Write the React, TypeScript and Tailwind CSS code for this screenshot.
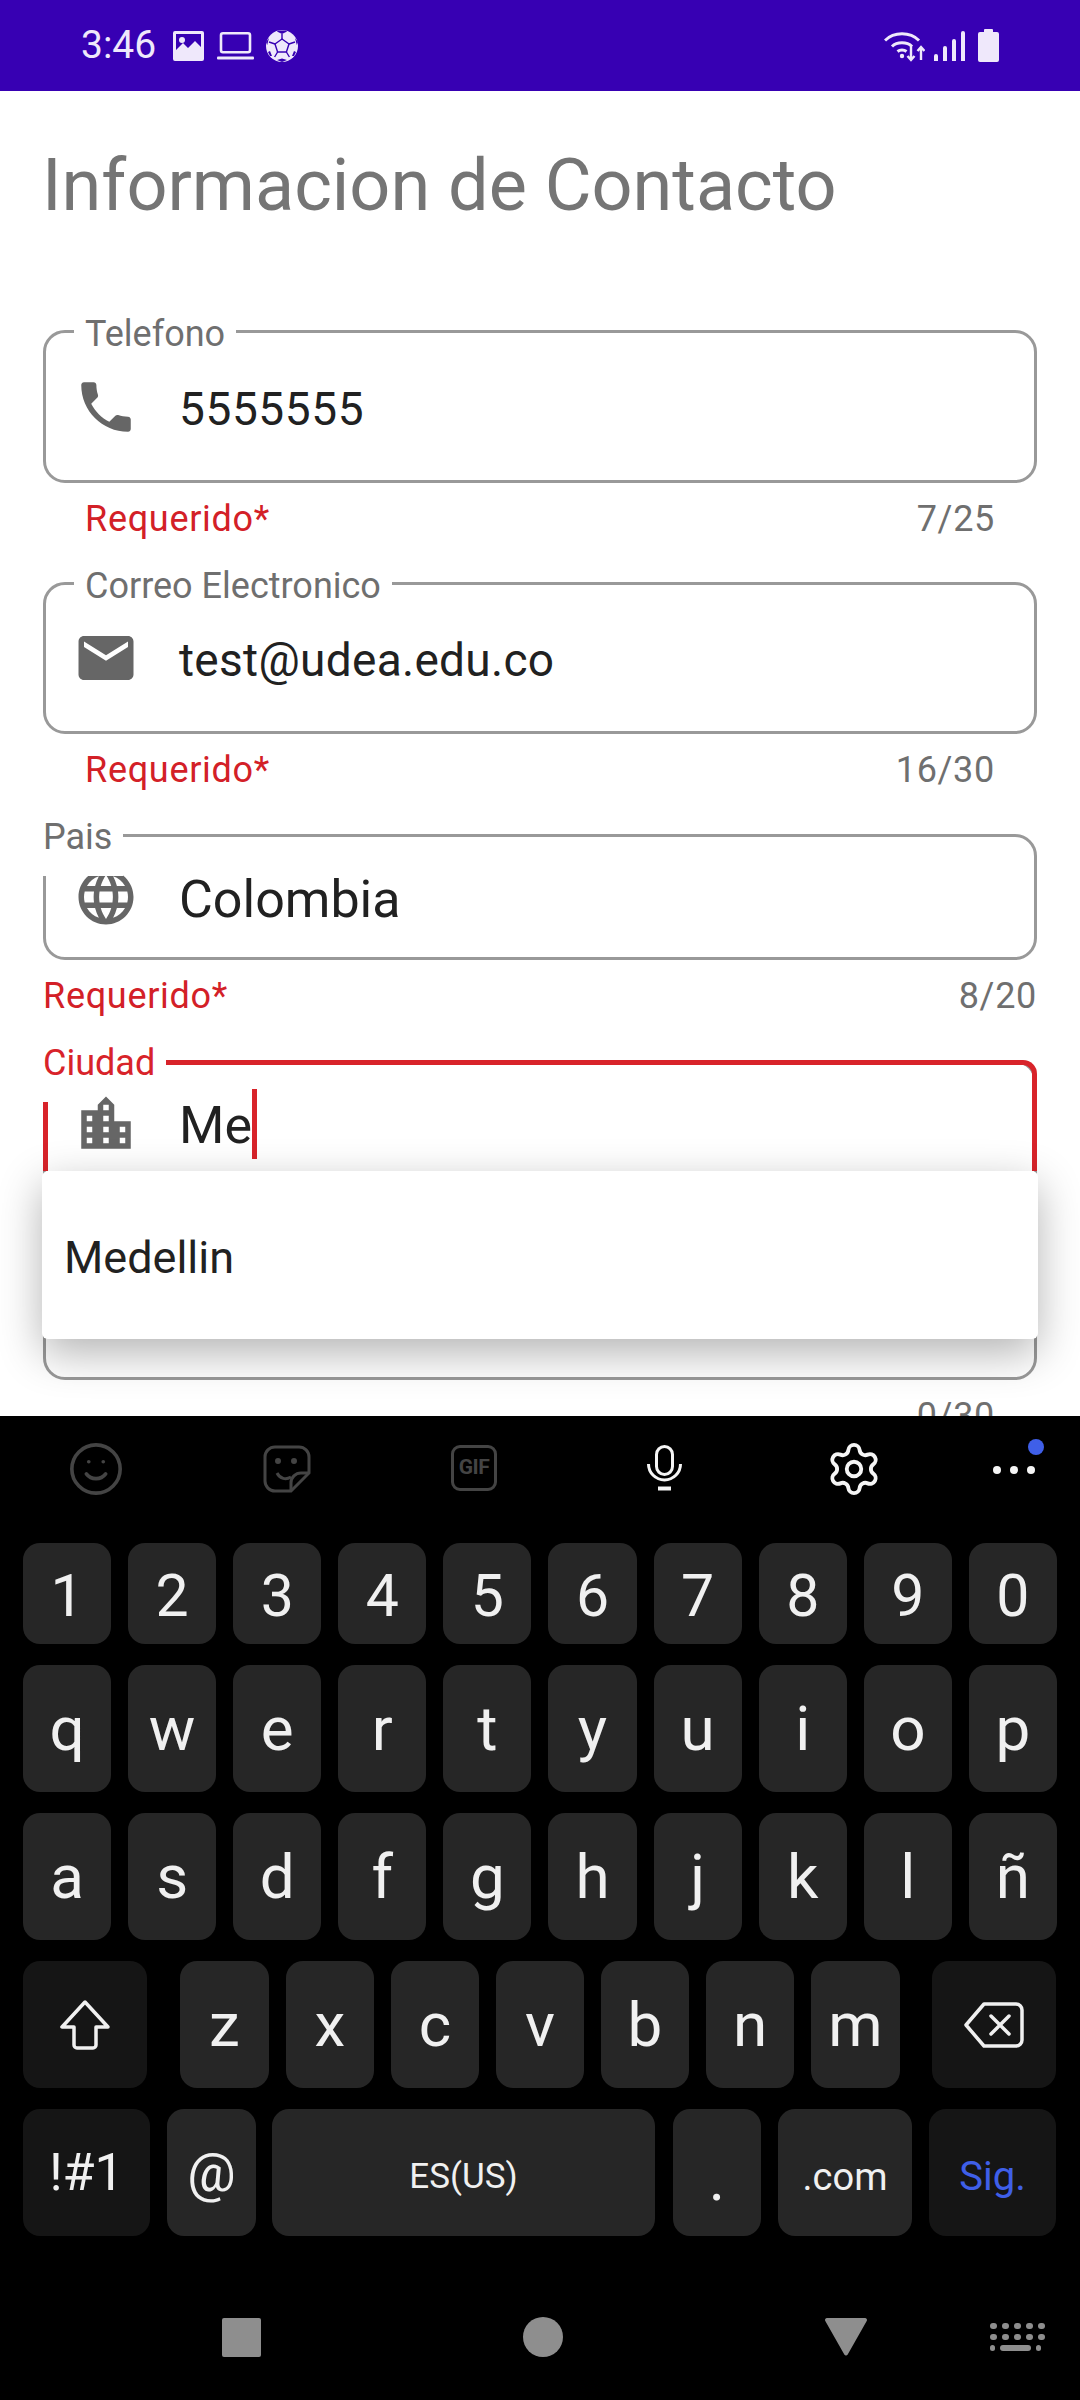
import { ReactNode } from "react";
import { Settings, Smile } from "lucide-react";

const font = { fontFamily: "Roboto, sans-serif" };

const PhoneIcon = () => (
  <path d="M6.62 10.79c1.44 2.83 3.76 5.14 6.59 6.59l2.2-2.2c.27-.27.67-.36 1.02-.24 1.12.37 2.33.57 3.57.57.55 0 1 .45 1 1V20c0 .55-.45 1-1 1-9.39 0-17-7.61-17-17 0-.55.45-1 1-1h3.5c.55 0 1 .45 1 1 0 1.25.2 2.45.57 3.57.11.35.03.74-.19 1.02l-2.25 2.2z" />
);
const MailIcon = () => (
  <path d="M20 4H4c-1.1 0-1.99.9-1.99 2L2 18c0 1.1.9 2 2 2h16c1.1 0 2-.9 2-2V6c0-1.1-.9-2-2-2zm0 4l-8 5-8-5V6l8 5 8-5v2z" />
);
const GlobeIcon = () => (
  <path d="M11.99 2C6.47 2 2 6.48 2 12s4.47 10 9.99 10C17.52 22 22 17.52 22 12S17.52 2 11.99 2zm6.93 6h-2.95c-.32-1.25-.78-2.45-1.38-3.56 1.84.63 3.37 1.91 4.33 3.56zM12 4.04c.83 1.2 1.48 2.53 1.91 3.96h-3.82c.43-1.43 1.08-2.76 1.91-3.96zM4.26 14C4.1 13.36 4 12.69 4 12s.1-1.36.26-2h3.38c-.08.66-.14 1.32-.14 2 0 .68.06 1.34.14 2H4.26zm.82 2h2.95c.32 1.25.78 2.45 1.38 3.56-1.84-.63-3.37-1.9-4.33-3.56zm2.95-8H5.08c.96-1.66 2.49-2.93 4.33-3.56C8.81 5.55 8.35 6.75 8.03 8zM12 19.96c-.83-1.2-1.48-2.53-1.91-3.96h3.82c-.43 1.43-1.08 2.76-1.91 3.96zM14.34 14H9.66c-.09-.66-.16-1.32-.16-2 0-.68.07-1.35.16-2h4.68c.09.65.16 1.32.16 2 0 .68-.07 1.34-.16 2zm.25 5.56c.6-1.11 1.06-2.31 1.38-3.56h2.95c-.96 1.65-2.49 2.93-4.33 3.56zM16.36 14c.08-.66.14-1.32.14-2 0-.68-.06-1.34-.14-2h3.38c.16.64.26 1.31.26 2s-.1 1.36-.26 2h-3.38z" />
);
const CityIcon = () => (
  <path d="M15 11V5l-3-3-3 3v2H3v14h18V11h-6zm-8 8H5v-2h2v2zm0-4H5v-2h2v2zm0-4H5V9h2v2zm6 8h-2v-2h2v2zm0-4h-2v-2h2v2zm0-4h-2V9h2v2zm0-4h-2V5h2v2zm6 12h-2v-2h2v2zm0-4h-2v-2h2v2z" />
);

function FieldIcon({ children }: { children: ReactNode }) {
  return (
    <svg viewBox="0 0 24 24" className="ml-[27px] h-[66px] w-[66px] shrink-0 fill-[#666666]">
      {children}
    </svg>
  );
}

function Helper({ left, counter, wide }: { left?: string; counter: string; wide?: boolean }) {
  return (
    <div
      className={`mt-[16px] flex h-[40px] items-center justify-between text-[36px] tracking-[0.7px] ${
        wide ? "pl-[43px] pr-[43px]" : "pl-[85px] pr-[85px]"
      }`}
    >
      <span className="text-[#d32027]">{left}</span>
      <span className="text-[#6f6f6f]">{counter}</span>
    </div>
  );
}

function StatusBar() {
  return (
    <div className="flex h-[91px] shrink-0 items-center justify-between bg-[#3700b3] pl-[81px] pr-[81px] text-[#efe8fb]">
      <div className="flex items-center">
        <span className="text-[39px] leading-none">3:46</span>
        <svg viewBox="0 0 31 30" className="ml-[17px] h-[30px] w-[31px] fill-[#efe8fb]">
          <path fillRule="evenodd" d="M2 0h27a2 2 0 0 1 2 2v26a2 2 0 0 1-2 2H2a2 2 0 0 1-2-2V2a2 2 0 0 1 2-2zm1 3v16l7-7 5 5 7-7 6 6V3H3z" />
          <circle cx="9" cy="9" r="3" />
        </svg>
        <svg viewBox="0 0 37 28" className="ml-[13px] h-[28px] w-[37px]">
          <rect x="4" y="1.3" width="29" height="19" rx="2" fill="none" stroke="#efe8fb" strokeWidth="2.6" />
          <rect x="0" y="24.5" width="37" height="3" rx="1" fill="#efe8fb" />
        </svg>
        <svg viewBox="0 0 32 32" className="ml-[12px] h-[32px] w-[32px]">
          <circle cx="16" cy="16" r="16" fill="#efe8fb" />
          <path d="M16 9l7 5-2.6 8h-8.8L9 14z" fill="#efe8fb" stroke="#3700b3" strokeWidth="1.4" />
          <path d="M16 9V4M23 14l6-2M20.4 22l3 5M11.6 22l-3 5M9 14l-6-2" stroke="#3700b3" strokeWidth="1.4" fill="none" />
          <path d="M11 1.5l5 2.5 5-2.5-1-1h-8zM29 8l1.8 7L32 12zM3 8L1.200 15 0 12zM11 30l5-1.500 5 1.500-5 2zM26 26l2-5 2 1-2 4zM6 26l-2-5-2 1 2 4z" fill="#3700b3" />
        </svg>
      </div>
      <div className="flex items-center">
        <svg viewBox="0 0 41 32" className="h-[32px] w-[41px]" fill="none" stroke="#efe8fb">
          <path d="M1 10.500C10 1.500 26 1.500 35 10.500" strokeWidth="3" />
          <path d="M8 16.500C13 11.500 23 11.500 28 16.500" strokeWidth="3" />
          <path d="M13.500 21.500c2.500-2 6.500-2 9 0" strokeWidth="3" />
          <circle cx="18" cy="26" r="2.200" fill="#efe8fb" stroke="none" />
          <path d="M27 16v13M23.500 26l3.500 4 3.500-4" strokeWidth="2.400" />
          <path d="M37 30V18M33.500 21l3.500-4 3.500 4" strokeWidth="2.400" />
        </svg>
        <div className="ml-[9px] flex h-[31px] items-end gap-[5px]">
          <div className="h-[7px] w-[4px] rounded-t-[2px] bg-[#efe8fb]" />
          <div className="h-[15px] w-[4px] rounded-t-[2px] bg-[#efe8fb]" />
          <div className="h-[22px] w-[4px] rounded-t-[2px] bg-[#efe8fb]" />
          <div className="h-[30px] w-[4px] rounded-t-[2px] bg-[#efe8fb]" />
        </div>
        <svg viewBox="0 0 21 33" className="ml-[13px] h-[33px] w-[21px] fill-[#efe8fb]">
          <path d="M6 3V1a1 1 0 0 1 1-1h7a1 1 0 0 1 1 1v2h4a2 2 0 0 1 2 2v26a2 2 0 0 1-2 2H2a2 2 0 0 1-2-2V5a2 2 0 0 1 2-2z" />
        </svg>
      </div>
    </div>
  );
}

function Form() {
  return (
    <div className="h-[1325px] shrink-0 overflow-hidden bg-white">
      <h1 className="ml-[42px] mt-[55px] h-[80px] text-[72px] leading-[80px] text-[#757575]">Informacion de Contacto</h1>

      {/* Telefono */}
      <div className="relative mx-[43px] mt-[104px] flex h-[153px] items-center rounded-[22px] border-[3px] border-[#999999]">
        <span className="absolute -top-[19px] left-[28px] bg-white px-[11px] text-[36px] leading-[40px] text-[#6f6f6f]">Telefono</span>
        <FieldIcon><PhoneIcon /></FieldIcon>
        <span className="ml-[40px] mt-[6px] text-[46px] tracking-[0.6px] text-[#212121]">5555555</span>
      </div>
      <Helper left="Requerido*" counter="7/25" />

      {/* Correo */}
      <div className="relative mx-[43px] mt-[43px] flex h-[152px] items-center rounded-[22px] border-[3px] border-[#999999]">
        <span className="absolute -top-[19px] left-[28px] bg-white px-[11px] text-[36px] leading-[40px] text-[#6f6f6f]">Correo Electronico</span>
        <FieldIcon><MailIcon /></FieldIcon>
        <span className="ml-[40px] mt-[4px] text-[46px] tracking-[0.3px] text-[#212121]">test@udea.edu.co</span>
      </div>
      <Helper left="Requerido*" counter="16/30" />

      {/* Pais */}
      <div className="relative mx-[43px] mt-[44px] flex h-[126px] items-center rounded-[22px] border-[3px] border-[#999999]">
        <span className="absolute -left-[3px] -top-[20px] h-[59px] bg-white pr-[11px] text-[36px] leading-[40px] text-[#6f6f6f]">Pais</span>
        <FieldIcon><GlobeIcon /></FieldIcon>
        <span className="ml-[40px] mt-[6px] text-[52px] text-[#212121]">Colombia</span>
      </div>
      <Helper left="Requerido*" counter="8/20" wide />

      {/* Ciudad */}
      <div className="relative mx-[43px] mt-[44px] h-[320px] rounded-[22px] border-[3px] border-[#999999]">
        <div className="absolute -left-[3px] -right-[3px] -top-[3px] h-[111px] rounded-t-[14px] border-[5px] border-b-0 border-[#d8232a]" />
        <span className="absolute -left-[3px] -top-[20px] h-[59px] bg-white pr-[11px] text-[36px] leading-[40px] text-[#d8232a]">Ciudad</span>
        <div className="relative mt-[28px] flex h-[66px] items-center">
          <FieldIcon><CityIcon /></FieldIcon>
          <span className="ml-[40px] mt-[3px] text-[52px] text-[#212121]">Me</span>
          <div className="h-[70px] w-[5px] bg-[#d8232a]" />
        </div>
        <div className="absolute -left-[4px] -right-[4px] top-[108px] flex h-[168px] items-center rounded-[6px] bg-white px-[22px] shadow-[0_14px_44px_rgba(0,0,0,0.3)]">
          <span className="mt-[6px] text-[45px] text-[#212121]">Medellin</span>
        </div>
      </div>
      <Helper counter="0/30" />
    </div>
  );
}

function Key({ w, dark, className, children }: { w: string; dark?: boolean; className?: string; children: ReactNode }) {
  return (
    <div className={`flex h-full shrink-0 items-center justify-center rounded-[17px] ${w} ${dark ? "bg-[#151515]" : "bg-[#262626]"} ${className ?? ""}`}>
      {children}
    </div>
  );
}

function KeyRow({ chars, h, className }: { chars: string; h: string; className?: string }) {
  return (
    <div className={`grid grid-cols-10 gap-x-[17px] ${h} ${className ?? ""}`}>
      {chars.split("").map((c) => (
        <Key key={c} w="w-full" className={chars === "1234567890" ? "pt-[4px]" : ""}>{c}</Key>
      ))}
    </div>
  );
}

function Keyboard() {
  return (
    <div className="flex flex-1 flex-col bg-black text-[#f0f0f0]">
      <div className="relative flex h-[127px] shrink-0 items-start">
        <Smile className="ml-[67px] mt-[24px] h-[58px] w-[58px] text-[#444444]" strokeWidth={1.5} />
        <svg viewBox="0 0 48 48" className="ml-[138px] mt-[29px] h-[48px] w-[48px] text-[#444444]" fill="none" stroke="currentColor" strokeWidth="3">
          <path d="M28 46H12A10 10 0 0 1 2 36V12A10 10 0 0 1 12 2h24a10 10 0 0 1 10 10v16L28 46z" />
          <path d="M28 46v-8a10 10 0 0 1 10-10h8" />
          <path d="M14 28c3 6 9 7 14 4" />
          <circle cx="15" cy="16" r="1.500" fill="currentColor" />
          <circle cx="31" cy="16" r="1.500" fill="currentColor" />
        </svg>
        <div className="ml-[140px] mt-[29px] flex h-[46px] w-[46px] items-center justify-center rounded-[9px] border-[3px] border-[#444444] text-[21px] font-bold tracking-[-0.5px] text-[#444444]">GIF</div>
        <svg viewBox="0 0 35 46" className="ml-[150px] mt-[29px] h-[46px] w-[35px]" fill="none" stroke="#f5f5f5" strokeWidth="3">
          <rect x="9.500" y="1.500" width="16" height="28" rx="8" />
          <path d="M1.500 19a16 16 0 0 0 32 0" />
          <path d="M11 43.500h13" strokeWidth="4" />
        </svg>
        <Settings className="ml-[143px] mt-[24px] h-[58px] w-[58px] text-[#f5f5f5]" strokeWidth={1.6} />
        <div className="ml-[110px] mt-[50px] flex gap-[9px]">
          <div className="h-[8px] w-[8px] rounded-full bg-[#f5f5f5]" />
          <div className="h-[8px] w-[8px] rounded-full bg-[#f5f5f5]" />
          <div className="h-[8px] w-[8px] rounded-full bg-[#f5f5f5]" />
        </div>
        <div className="absolute left-[1028px] top-[23px] h-[16px] w-[16px] rounded-full bg-[#3f5fe8]" />
      </div>

      <div className="flex flex-col gap-y-[21px] px-[23px] text-[62px] leading-none">
        <KeyRow chars="1234567890" h="h-[101px]" className="text-[59px]" />
        <KeyRow chars="qwertyuiop" h="h-[127px]" />
        <KeyRow chars="asdfghjklñ" h="h-[127px]" />
        <div className="flex h-[127px]">
          <Key w="w-[124px]" dark>
            <svg viewBox="0 0 50 50" className="h-[50px] w-[50px]" fill="none" stroke="#f0f0f0" strokeWidth="3.500" strokeLinejoin="round">
              <path d="M25 2L2 27h12v18a3 3 0 0 0 3 3h16a3 3 0 0 0 3-3V27h12z" />
            </svg>
          </Key>
          <Key w="w-[89px]" className="ml-[33px]">z</Key>
          <Key w="w-[88px]" className="ml-[17px]">x</Key>
          <Key w="w-[88px]" className="ml-[17px]">c</Key>
          <Key w="w-[88px]" className="ml-[17px]">v</Key>
          <Key w="w-[88px]" className="ml-[17px]">b</Key>
          <Key w="w-[88px]" className="ml-[17px]">n</Key>
          <Key w="w-[89px]" className="ml-[17px]">m</Key>
          <Key w="w-[124px]" dark className="ml-[32px]">
            <svg viewBox="0 0 60 46" className="h-[46px] w-[60px]" fill="none" stroke="#f0f0f0" strokeWidth="3.500" strokeLinejoin="round">
              <path d="M20 2h32a6 6 0 0 1 6 6v30a6 6 0 0 1-6 6H20L2 23z" />
              <path d="M27 14l18 18M45 14L27 32" strokeLinecap="round" />
            </svg>
          </Key>
        </div>
        <div className="flex h-[127px]">
          <Key w="w-[127px]" dark className="text-[52px]">!#1</Key>
          <Key w="w-[89px]" className="ml-[17px] text-[54px]">@</Key>
          <Key w="w-[383px]" className="ml-[16px] pt-[8px] text-[35px]">ES(US)</Key>
          <Key w="w-[88px]" className="ml-[18px] pt-[12px]">.</Key>
          <Key w="w-[134px]" className="ml-[17px] pt-[8px] text-[38px]">.com</Key>
          <Key w="w-[127px]" dark className="ml-[17px] pt-[8px] text-[40px] text-[#3f5fe8]">Sig.</Key>
        </div>
      </div>

      <div className="mt-[81px] flex items-center">
        <div className="ml-[222px] h-[39px] w-[39px] rounded-[2px] bg-[#8e8e8e]" />
        <div className="ml-[262px] h-[40px] w-[40px] rounded-full bg-[#8e8e8e]" />
        <svg viewBox="0 0 42 38" className="ml-[262px] h-[38px] w-[42px] fill-[#8e8e8e]">
          <path d="M2 0h38a2 2 0 0 1 1.700 3L22.700 36.500a2 2 0 0 1-3.400 0L.3 3A2 2 0 0 1 2 0z" />
        </svg>
        <div className="ml-[123px] flex flex-col gap-[5px]">
          <div className="flex gap-[5px]">
            {[0, 1, 2, 3, 4].map((i) => <div key={i} className="h-[6px] w-[7px] rounded-full bg-[#8e8e8e]" />)}
          </div>
          <div className="flex gap-[5px]">
            {[0, 1, 2, 3, 4].map((i) => <div key={i} className="h-[6px] w-[7px] rounded-full bg-[#8e8e8e]" />)}
          </div>
          <div className="flex gap-[5px]">
            <div className="h-[6px] w-[5px] rounded-full bg-[#8e8e8e]" />
            <div className="h-[6px] w-[31px] rounded-full bg-[#8e8e8e]" />
            <div className="h-[6px] w-[5px] rounded-full bg-[#8e8e8e]" />
          </div>
        </div>
      </div>
    </div>
  );
}

export default function App() {
  return (
    <div className="flex h-[2400px] w-[1080px] flex-col overflow-hidden bg-white" style={font}>
      <StatusBar />
      <Form />
      <Keyboard />
    </div>
  );
}
